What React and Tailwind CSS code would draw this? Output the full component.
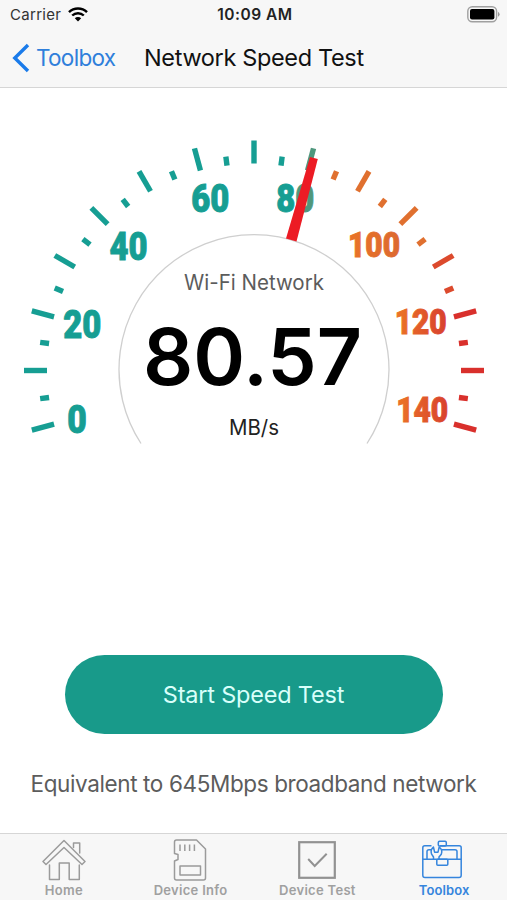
const CX = 254;
const CY = 370.5;

function tickColor(a) {
  if (a <= 97.5) return "#169e93";
  if (a < 106) return "#4f977d";
  if (a < 148) return "#e0702f";
  if (a < 163) return "#dc4a2d";
  return "#d9302c";
}

// Angles run clockwise, 0 is the left end of the horizontal axis.
const TICKS = Array.from({ length: 29 }, (_, i) => ({ a: -15 + i * 7.5, major: i % 2 === 0 }));

const LABELS = [
  { t: "0", x: 67.3, y: 433.2, w: 19.5, s: 39, f: "#169e93" },
  { t: "20", x: 63.3, y: 338.2, w: 38, s: 39, f: "#169e93" },
  { t: "40", x: 109.6, y: 260, w: 38, s: 39, f: "#169e93" },
  { t: "60", x: 191.3, y: 212, w: 38, s: 39, f: "#169e93" },
  { t: "80", x: 276.3, y: 212, w: 38, s: 39, f: "url(#g80)" },
  { t: "100", x: 348, y: 256.7, w: 52, s: 34.5, f: "url(#g100)" },
  { t: "120", x: 394.7, y: 333.7, w: 52, s: 34.5, f: "url(#g120)" },
  { t: "140", x: 396.2, y: 421.9, w: 52, s: 34.5, f: "url(#g120)" },
];

function Gauge() {
  return (
    <svg width="507" height="356" viewBox="0 88 507 356" className="block shrink-0">
      <defs>
        <linearGradient id="g80">
          <stop offset="0.5" stopColor="#169e93" />
          <stop offset="0.54" stopColor="#4f977d" />
        </linearGradient>
        <linearGradient id="g100"><stop offset="0" stopColor="#ea7426" /><stop offset="1" stopColor="#dc6932" /></linearGradient>
        <linearGradient id="g120"><stop offset="0" stopColor="#ec7626" /><stop offset="1" stopColor="#d8402f" /></linearGradient>
      </defs>
      {TICKS.map(({ a, major }) => (
        <rect
          key={a}
          x={major ? CX - 230 : CX - 215.7}
          y={CY - 2.7}
          width={major ? 23 : 9}
          height="5.4"
          fill={tickColor(a)}
          transform={`rotate(${a} ${CX} ${CY})`}
        />
      ))}
      <path d="M141 443.5 A135 135 0 1 1 367 443.5" fill="none" stroke="#cfcfcf" strokeWidth="1.3" />
      {LABELS.map((l) => (
        <text
          key={l.t}
          x={l.x}
          y={l.y}
          textLength={l.w}
          lengthAdjust="spacingAndGlyphs"
          fontSize={l.s}
          fontWeight="900"
          fill={l.f}
          stroke={l.f}
          strokeWidth="1"
          fontFamily="Roboto, 'Liberation Sans', sans-serif"
        >
          {l.t}
        </text>
      ))}
      <path d="M286 238.5 L296.5 241.5 L317.8 159 L310 157 Z" fill="#ec1b24" />
      <g fontFamily="Inter, sans-serif">
        <text x="184" y="290" textLength="140" lengthAdjust="spacingAndGlyphs" fontSize="21" fill="#5c5c5c">Wi-Fi Network</text>
        <text x="143" y="385" textLength="219" lengthAdjust="spacingAndGlyphs" fontSize="79" fontWeight="600" fill="#000">80.57</text>
        <text x="229" y="435" textLength="50" lengthAdjust="spacingAndGlyphs" fontSize="21" fill="#222">MB/s</text>
      </g>
    </svg>
  );
}

function HomeIcon() {
  return (
    <svg width="44" height="42" viewBox="0 0 44 42" fill="none" stroke="#9b9b9b" strokeWidth="1.5" strokeLinejoin="round" strokeLinecap="round" className="ml-[2px]">
      <path d="M22 1.5 L43 22.5 L40 25.5 L22 8.5 L4 25.5 L1 22.5 Z" />
      <path d="M31.5 8.5 V4 H37.7 V14" />
      <path d="M7.5 26 V40.5 H17.3 V24 H27.2 V40.5 H37.3 V26" />
    </svg>
  );
}

function CardIcon() {
  return (
    <svg width="34" height="42" viewBox="0 0 34 42" fill="none" stroke="#9b9b9b" strokeWidth="1.5" strokeLinejoin="round">
      <path d="M3.5 1 H23.5 L32.5 10 V39 Q32.5 41 30.5 41 H3.5 Q1.5 41 1.5 39 V22 L5 20.5 V15.5 L1.5 14.5 V3 Q1.5 1 3.5 1 Z" />
      <path d="M7 5.5 V12 M11.8 5.5 V12 M16.6 5.5 V12 M21.4 5.5 V12" />
      <rect x="7" y="27" width="20.5" height="9" />
    </svg>
  );
}

function CheckIcon() {
  return (
    <svg width="38" height="38" viewBox="0 0 38 38" fill="none" stroke="#929292" strokeWidth="2.2">
      <rect x="1.2" y="1.2" width="35.6" height="35.6" />
      <path d="M10.2 18 L16.7 25 L28.7 12.7" strokeWidth="2" />
    </svg>
  );
}

function ToolboxIcon() {
  return (
    <svg width="42" height="40" viewBox="0 0 42 40" fill="none" stroke="#3585dd" strokeWidth="1.5" strokeLinejoin="round" className="mr-[4px]">
      <path d="M10.5 5.8 H3.8 Q1.8 5.8 1.8 7.8 V35.2 Q1.8 37.5 4 37.5 H38 Q40.2 37.5 40.2 35.2 V7.8 Q40.2 5.8 38.2 5.8 H19" />
      <rect x="17.3" y="1.2" width="8" height="4.8" rx="1.2" />
      <path d="M1.8 19.3 H40.2" />
      <rect x="15.8" y="19.3" width="11" height="6" rx="1" />
      <path d="M6 19 V11.5 Q6 9.7 8 9.7 H10 M21 9.7 H34 Q36 9.7 36 11.5 V19" />
      <path d="M12.5 19 V17 L10.6 14.2 Q9 10 12.4 7 L13.6 12.2 H17 L18.2 7 Q22 10 20.3 14.2 L18 17 V19" />
    </svg>
  );
}

function Tab({ label, icon, active, tracking }) {
  return (
    <div className="flex min-w-0 flex-1 flex-col items-center pt-1">
      <div className="flex h-[44px] items-center justify-center">{icon}</div>
      <span className={`whitespace-nowrap pl-px text-[13px] leading-[16px] font-semibold ${tracking} ${active ? "text-[#3585dd]" : "text-[#a0a0a0]"}`}>
        {label}
      </span>
    </div>
  );
}

export default function App() {
  return (
    <div className="flex h-[900px] w-[507px] flex-col overflow-hidden bg-white font-['Inter',sans-serif]">
      <header className="flex h-[88px] shrink-0 flex-col border-b border-[#d6d6d6] bg-[#f7f7f7]">
        <div className="grid h-[29px] grid-cols-3 items-center pl-[10px] pr-[7px]">
          <div className="flex items-center gap-[7px]">
            <span className="text-[15px] leading-[20px] tracking-[0.3px] text-[#333]">Carrier</span>
            <svg width="20" height="15" viewBox="0 0 20 15" fill="none" stroke="#000">
              <path d="M1 5.2 A13 13 0 0 1 19 5.2" strokeWidth="2.5" />
              <path d="M4.2 8.5 A8.4 8.4 0 0 1 15.8 8.5" strokeWidth="2.4" />
              <path d="M6.8 11.3 A4.6 4.6 0 0 1 13.2 11.3 L10 14.5 Z" fill="#000" stroke="none" />
            </svg>
          </div>
          <span className="whitespace-nowrap text-center text-[15.5px] leading-[20px] font-semibold tracking-[0.5px] text-[#222]">10:09 AM</span>
          <div className="flex justify-end">
            <svg width="33" height="17" viewBox="0 0 33 17">
              <rect x="0.8" y="0.8" width="28.8" height="15" rx="4.5" fill="none" stroke="#a0a0a0" strokeWidth="1.4" />
              <rect x="3" y="3" width="24.4" height="10.6" rx="2" fill="#000" />
              <path d="M31 5.8 Q32.6 6.8 32.6 8.3 Q32.6 9.8 31 10.8 Z" fill="#999" />
            </svg>
          </div>
        </div>
        <div className="flex h-[58px] items-center pl-[12px]">
          <svg width="18" height="30" viewBox="0 0 18 30" fill="none" stroke="#1a7bea" strokeWidth="3.4">
            <path d="M16 2 L2.8 15 L16 28" />
          </svg>
          <span className="ml-[6px] w-[108px] whitespace-nowrap text-[22.5px] tracking-[-0.7px] text-[#2f7fdb]">Toolbox</span>
          <h1 className="whitespace-nowrap text-[23.5px] font-normal tracking-[-0.35px] text-[#111]">Network Speed Test</h1>
        </div>
      </header>
      <main className="flex flex-1 flex-col items-center">
        <Gauge />
        <button className="mt-[211px] h-[79px] w-[378px] shrink-0 rounded-full bg-[#189a8a] text-[23.5px] tracking-[-0.2px] text-[#d9fffa]">
          Start Speed Test
        </button>
        <p className="mt-[35px] whitespace-nowrap text-[22.5px] leading-[30px] tracking-[-0.38px] text-[#5c5c5c]">
          Equivalent to 645Mbps broadband network
        </p>
      </main>
      <nav className="flex h-[67px] shrink-0 border-t border-[#d6d6d6] bg-[#f7f7f7]">
        <Tab label="Home" icon={<HomeIcon />} tracking="tracking-[0.3px]" />
        <Tab label="Device Info" icon={<CardIcon />} tracking="tracking-[0.3px]" />
        <Tab label="Device Test" icon={<CheckIcon />} tracking="tracking-[0.3px]" />
        <Tab label="Toolbox" icon={<ToolboxIcon />} tracking="tracking-[0.1px]" active />
      </nav>
    </div>
  );
}
